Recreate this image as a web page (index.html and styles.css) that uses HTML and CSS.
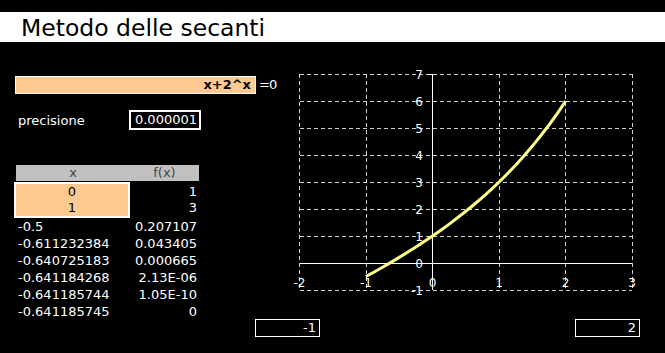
FILE: index.html
```html
<!DOCTYPE html>
<html lang="it">
<head>
    <meta charset="UTF-8">
    <title>Metodo delle secanti</title>
    <link rel="stylesheet" href="styles.css">
</head>
<body>
    <div class="titlebar">Metodo delle secanti</div>

    <div class="main">
        <div class="left">
            <div class="equation">
                <div class="fx-input">x+2^x</div>
                <span class="eq">=0</span>
            </div>

            <div class="precision">
                <span class="label">precisione</span>
                <div class="box">0.000001</div>
            </div>

            <div class="table">
                <div class="thead"><span>x</span><span>f(x)</span></div>
                <div class="seeds">
                    <div class="seed-x"><span>0</span><span>1</span></div>
                    <div class="seed-f"><span>1</span><span>3</span></div>
                </div>
                <div class="row"><span>-0.5</span><span>0.207107</span></div>
                <div class="row"><span>-0.611232384</span><span>0.043405</span></div>
                <div class="row"><span>-0.640725183</span><span>0.000665</span></div>
                <div class="row"><span>-0.641184268</span><span>2.13E-06</span></div>
                <div class="row"><span>-0.641185744</span><span>1.05E-10</span></div>
                <div class="row"><span>-0.641185745</span><span>0</span></div>
            </div>
        </div>

        <div class="right">
            <svg class="graph" width="410" height="245" viewBox="0 0 410 245">
                <g transform="translate(-255,-60)">
                    <g class="grid">
                        <line x1="299.5" y1="74" x2="299.5" y2="290"/>
                        <line x1="366" y1="74" x2="366" y2="290"/>
                        <line x1="499" y1="74" x2="499" y2="290"/>
                        <line x1="565.5" y1="74" x2="565.5" y2="290"/>
                        <line x1="632" y1="74" x2="632" y2="290"/>
                        <line x1="299.5" y1="74" x2="632" y2="74"/>
                        <line x1="299.5" y1="101" x2="632" y2="101"/>
                        <line x1="299.5" y1="128" x2="632" y2="128"/>
                        <line x1="299.5" y1="155" x2="632" y2="155"/>
                        <line x1="299.5" y1="182" x2="632" y2="182"/>
                        <line x1="299.5" y1="209" x2="632" y2="209"/>
                        <line x1="299.5" y1="236" x2="632" y2="236"/>
                        <line x1="299.5" y1="290" x2="632" y2="290"/>
                    </g>
                    <g class="axis">
                        <line x1="299.5" y1="263.5" x2="632" y2="263.5"/>
                        <line x1="432.5" y1="74" x2="432.5" y2="290"/>
                        <line x1="427" y1="74.5" x2="432.5" y2="74.5"/>
                    </g>
                    <g class="ylabels">
                        <text x="423" y="75">7</text>
                        <text x="423" y="102">6</text>
                        <text x="423" y="129">5</text>
                        <text x="423" y="156">4</text>
                        <text x="423" y="183">3</text>
                        <text x="423" y="210">2</text>
                        <text x="423" y="237">1</text>
                        <text x="423" y="264">0</text>
                        <text x="423" y="291">-1</text>
                    </g>
                    <g class="xlabels">
                        <text x="299.5" y="283">-2</text>
                        <text x="366" y="283">-1</text>
                        <text x="432.5" y="283">0</text>
                        <text x="499" y="283">1</text>
                        <text x="565.5" y="283">2</text>
                        <text x="632" y="283">3</text>
                    </g>
                    <polyline class="curve" points="365.9,276.5 374.2,272.0 382.6,267.2 390.9,262.4 399.2,257.4 407.5,252.3 415.9,247.0 424.2,241.6 432.5,236 440.8,230.2 449.2,224.1 457.5,217.8 465.8,211.3 474.1,204.5 482.5,197.3 490.8,189.9 499.1,182 507.4,173.7 515.8,165.0 524.1,155.8 532.4,146.1 540.7,135.8 549.1,124.9 557.4,113.3 565.7,101"/>
                </g>
            </svg>

            <div class="ranges">
                <div class="range">-1</div>
                <div class="range">2</div>
            </div>
        </div>
    </div>
</body>
</html>
```

FILE: styles.css
```css
body {
    margin: 0;
    padding: 0;
    background: #000;
    color: #fff;
    font-family: 'DejaVu Sans', Verdana, sans-serif;
    font-size: 13px;
    width: 665px;
    height: 353px;
    overflow: hidden;
}

.titlebar {
    margin-top: 12px;
    height: 29px;
    padding: 1px 0 0 21px;
    background: #fff;
    color: #000;
    font-size: 23.5px;
    line-height: 30px;
}

.main {
    display: flex;
    margin-top: 18px;
}

.left {
    width: 240px;
    flex: none;
    padding: 16px 0 0 15px;
}

.equation {
    display: flex;
    align-items: center;
    gap: 3px;
    white-space: nowrap;
}

.fx-input {
    width: 241px;
    height: 18px;
    flex: none;
    box-sizing: border-box;
    border: 1px solid #fff;
    background: #ffc992;
    color: #000;
    font-weight: bold;
    line-height: 16px;
    text-align: right;
    padding-right: 4px;
}

.eq {
    line-height: 16px;
    letter-spacing: -1px;
}

.precision {
    display: flex;
    align-items: center;
    margin-top: 16px;
}

.precision .label {
    width: 111px;
    padding-left: 3px;
    flex: none;
}

.precision .box {
    width: 72px;
    height: 20px;
    box-sizing: border-box;
    border: 2px solid #fff;
    line-height: 16px;
    text-align: right;
    padding-right: 2px;
}

.table {
    margin: 35px 0 0 1px;
    width: 183px;
}

.thead,
.row,
.seeds {
    display: grid;
    grid-template-columns: 114px 69px;
}

.thead {
    height: 16px;
    line-height: 16px;
    background: #c0c0c0;
    color: #444;
    text-align: center;
}

.seeds {
    margin-top: 1px;
}

.seed-x {
    display: flex;
    flex-direction: column;
    margin-left: -2px;
    width: 116px;
    box-sizing: border-box;
    border: 2px solid #fff;
    background: #ffc992;
    color: #000;
    text-align: center;
}

.seed-f {
    display: flex;
    flex-direction: column;
    padding: 2px 2px 2px 0;
    text-align: right;
}

.seed-x span,
.seed-f span {
    height: 16px;
    line-height: 16px;
}

.row {
    height: 17px;
    line-height: 17px;
}

.row span:first-child {
    padding-left: 2px;
}

.row span:last-child {
    text-align: right;
    padding-right: 2px;
}

.right {
    width: 410px;
    flex: none;
}

.graph {
    display: block;
}

.grid line {
    stroke: #cfcfcf;
    stroke-width: 1;
    stroke-dasharray: 4 3;
    shape-rendering: crispEdges;
}

.axis line {
    stroke: #fff;
    stroke-width: 1;
    shape-rendering: crispEdges;
}

.ylabels text,
.xlabels text {
    fill: #fff;
    font-family: 'DejaVu Sans', Verdana, sans-serif;
    font-size: 12px;
    dominant-baseline: middle;
}

.ylabels text {
    text-anchor: end;
}

.xlabels text {
    text-anchor: middle;
}

.curve {
    fill: none;
    stroke: #ffff88;
    stroke-width: 3;
    stroke-linejoin: round;
}

.ranges {
    display: flex;
    justify-content: space-between;
    margin-top: 14px;
    padding-right: 25px;
}

.range {
    width: 65px;
    height: 18px;
    box-sizing: border-box;
    border: 1px solid #fff;
    line-height: 16px;
    text-align: right;
    padding-right: 3px;
}
```
